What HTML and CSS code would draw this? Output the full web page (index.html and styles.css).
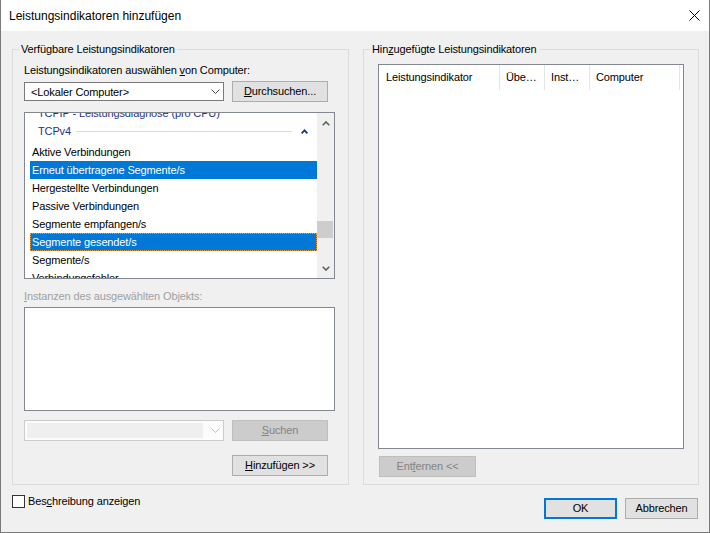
FILE: index.html
```html
<!DOCTYPE html>
<html lang="de">
<head>
<meta charset="utf-8">
<title>Leistungsindikatoren hinzufügen</title>
<link rel="stylesheet" href="styles.css">
</head>
<body>
<div class="window">
  <div class="titlebar">
    <span class="title">Leistungsindikatoren hinzufügen</span>
    <svg class="close" width="11" height="11" viewBox="0 0 11 11"><path d="M0.5 0.5 L10.5 10.5 M10.5 0.5 L0.5 10.5" stroke="#000" stroke-width="1" fill="none"/></svg>
  </div>
  <div class="main">
    <div class="groups">
      <fieldset class="group group-left">
        <legend>Verfügbare Leistungsindikatoren</legend>
        <div class="group-inner left-inner">
          <div class="label">Leistungsindikatoren auswählen <u>v</u>on Computer:</div>
          <div class="row row-computer">
            <div class="combo">
              <span class="combo-text">&lt;Lokaler Computer&gt;</span>
              <svg class="chev" width="9" height="5" viewBox="0 0 9 5"><path d="M0.5 0.5 L4.5 4.5 L8.5 0.5" stroke="#444" stroke-width="1" fill="none"/></svg>
            </div>
            <button class="btn btn-wide"><u>D</u>urchsuchen...</button>
          </div>
          <div class="listbox">
            <div class="list-items">
              <div class="grp-clipped"><span>TCPIP - Leistungsdiagnose (pro CPU)</span></div>
              <div class="grp">
                <span class="grp-name">TCPv4</span>
                <span class="grp-line"></span>
                <svg class="grp-caret" width="7" height="5" viewBox="0 0 7 5"><path d="M0.6 4.4 L3.5 1.4 L6.4 4.4" stroke="#1e3287" stroke-width="1.8" fill="none"/></svg>
              </div>
              <div class="item">Aktive Verbindungen</div>
              <div class="item sel">Erneut übertragene Segmente/s</div>
              <div class="item">Hergestellte Verbindungen</div>
              <div class="item">Passive Verbindungen</div>
              <div class="item">Segmente empfangen/s</div>
              <div class="item sel focus">Segmente gesendet/s</div>
              <div class="item">Segmente/s</div>
              <div class="item">Verbindungsfehler</div>
            </div>
            <div class="scrollbar">
              <div class="sb-btn">
                <svg width="8" height="5" viewBox="0 0 8 5"><path d="M0.7 4.3 L4 1 L7.3 4.3" stroke="#606060" stroke-width="1.6" fill="none"/></svg>
              </div>
              <div class="sb-track"><div class="sb-thumb"></div></div>
              <div class="sb-btn">
                <svg width="8" height="5" viewBox="0 0 8 5"><path d="M0.7 0.7 L4 4 L7.3 0.7" stroke="#606060" stroke-width="1.6" fill="none"/></svg>
              </div>
            </div>
          </div>
          <div class="label label-instances disabled-text"><u>I</u>nstanzen des ausgewählten Objekts:</div>
          <div class="instances"></div>
          <div class="row row-search">
            <div class="combo combo-disabled">
              <span class="combo-fill"></span>
              <svg class="chev" width="9" height="5" viewBox="0 0 9 5"><path d="M0.5 0.5 L4.5 4.5 L8.5 0.5" stroke="#bdbdbd" stroke-width="1" fill="none"/></svg>
            </div>
            <button class="btn btn-wide btn-disabled"><u>S</u>uchen</button>
          </div>
          <div class="row row-add">
            <button class="btn btn-wide"><u>H</u>inzufügen &gt;&gt;</button>
          </div>
        </div>
      </fieldset>
      <fieldset class="group group-right">
        <legend>Hin<u>z</u>ugefügte Leistungsindikatoren</legend>
        <div class="group-inner right-inner">
          <div class="listview">
            <div class="lv-header">
              <div class="lv-col col-1">Leistungsindikator</div>
              <div class="lv-col col-2">Übe…</div>
              <div class="lv-col col-3">Inst…</div>
              <div class="lv-col col-4">Computer</div>
            </div>
          </div>
          <button class="btn btn-remove btn-disabled">Ent<u>f</u>ernen &lt;&lt;</button>
        </div>
      </fieldset>
    </div>
    <div class="footer">
      <label class="check"><span class="check-box"></span><span class="check-text">Bes<u>c</u>hreibung anzeigen</span></label>
      <div class="actions">
        <button class="btn btn-dlg btn-ok">OK</button>
        <button class="btn btn-dlg">Abbrechen</button>
      </div>
    </div>
  </div>
</div>
</body>
</html>
```
FILE: styles.css
```css
html, body {
  margin: 0;
  padding: 0;
  background: #f0f0f0;
}

body {
  font-family: "Liberation Sans", Arial, sans-serif;
  font-size: 11px;
  letter-spacing: -0.13px;
  color: #000;
}

u {
  text-decoration: underline;
  text-underline-offset: 1px;
}

.window {
  width: 710px;
  height: 533px;
  box-sizing: border-box;
  border: 1px solid #7a7a7a;
  border-top: none;
  background: #f0f0f0;
  display: flex;
  flex-direction: column;
}

.titlebar {
  height: 31px;
  flex: none;
  background: #fff;
  display: flex;
  align-items: center;
  padding-left: 8px;
  font-size: 12px;
  letter-spacing: 0;
}

.close {
  margin-left: auto;
  margin-right: 9px;
  display: block;
}

.main {
  padding: 10px 10px 0 11px;
}

.groups {
  display: flex;
  gap: 14px;
  align-items: stretch;
}

.group {
  margin: 0;
  padding: 0;
  border: 1px solid #dcdcdc;
  min-width: 0;
  box-sizing: border-box;
}

.group legend {
  padding: 0 2px;
  margin-left: 6px;
  line-height: 16px;
}

.group-left {
  width: 337px;
}

.group-right {
  width: 336px;
}

.left-inner {
  padding: 5px 0 8px 11px;
}

.right-inner {
  padding: 7px 0 0 14px;
}

.label {
  line-height: 16px;
  height: 16px;
  white-space: nowrap;
}

.disabled-text {
  color: #a0a0a0;
}

.row {
  display: flex;
  width: 304px;
  gap: 8px;
  height: 21px;
  align-items: center;
}

.row-computer {
  margin-top: 3px;
}

.combo {
  width: 200px;
  height: 19px;
  box-sizing: border-box;
  border: 1px solid #7a7a7a;
  background: #fff;
  display: flex;
  align-items: center;
  padding-left: 6px;
  padding-right: 3px;
}

.combo-text {
  flex: 1;
  white-space: nowrap;
}

.chev {
  display: block;
  margin-right: 0;
}

.combo-disabled {
  height: 21px;
  border-color: #cccccc;
  padding-left: 2px;
  background: #fcfcfc;
}

.combo-fill {
  width: 178px;
  height: 15px;
  background: #efefef;
  margin-right: 8px;
}

.btn {
  height: 21px;
  box-sizing: border-box;
  border: 1px solid #adadad;
  background: #e1e1e1;
  font: inherit;
  letter-spacing: inherit;
  color: #000;
  padding: 0;
  margin: 0;
  line-height: 19px;
  text-align: center;
  flex: none;
}

.btn-wide {
  width: 96px;
}

.btn-disabled {
  background: #cccccc;
  border-color: #bfbfbf;
  color: #838383;
}

.listbox {
  margin-top: 10px;
  width: 311px;
  height: 167px;
  box-sizing: border-box;
  border: 1px solid #828790;
  background: #fff;
  display: flex;
}

.list-items {
  flex: 1;
  overflow: hidden;
  padding-left: 5px;
}

.grp-clipped {
  height: 6px;
  overflow: hidden;
  padding-left: 8px;
  color: #1e3287;
}

.grp-clipped span {
  display: block;
  line-height: 18px;
  margin-top: -9px;
  white-space: nowrap;
}

.grp {
  height: 24px;
  display: flex;
  align-items: center;
  padding-left: 8px;
  padding-right: 9px;
  color: #1e3287;
}

.grp-name {
  line-height: 24px;
}

.grp-line {
  flex: 1;
  height: 1px;
  background: #d5dbe8;
  margin: 0 9px 0 5px;
}

.grp-caret {
  display: block;
}

.item {
  height: 18px;
  line-height: 18px;
  padding-left: 2px;
  white-space: nowrap;
  box-sizing: border-box;
}

.item.sel {
  background: #0078d7;
  color: #fff;
}

.item.focus {
  outline: 1px dotted #f0a040;
  outline-offset: -1px;
}

.scrollbar {
  width: 17px;
  flex: none;
  background: #f0f0f0;
  display: flex;
  flex-direction: column;
}

.sb-btn {
  height: 20px;
  flex: none;
  display: flex;
  align-items: center;
  justify-content: center;
}

.sb-btn svg {
  display: block;
}

.sb-track {
  flex: 1;
}

.sb-thumb {
  margin-top: 88px;
  height: 17px;
  width: 16px;
  background: #cdcdcd;
}

.label-instances {
  margin-top: 9px;
}

.instances {
  margin-top: 3px;
  width: 311px;
  height: 104px;
  box-sizing: border-box;
  border: 1px solid #828790;
  background: #fff;
}

.row-search {
  margin-top: 9px;
}

.row-add {
  margin-top: 14px;
  justify-content: flex-end;
}

.listview {
  width: 306px;
  height: 385px;
  box-sizing: border-box;
  border: 1px solid #828790;
  background: #fff;
}

.lv-header {
  display: flex;
  height: 25px;
}

.lv-col {
  box-sizing: border-box;
  border-right: 1px solid #e5e5e5;
  line-height: 25px;
  padding-left: 6px;
  white-space: nowrap;
  overflow: hidden;
}

.col-1 { width: 121px; padding-left: 7px; }
.col-2 { width: 45px; }
.col-3 { width: 45px; }
.col-4 { width: 90px; }

.btn-remove {
  display: block;
  margin-top: 7px;
  margin-left: 1px;
  width: 97px;
}

.footer {
  display: flex;
  justify-content: space-between;
  align-items: flex-start;
}

.check {
  margin-top: 8px;
  display: flex;
  align-items: center;
  height: 16px;
  line-height: 16px;
}

.check-box {
  width: 13px;
  height: 13px;
  box-sizing: border-box;
  border: 1px solid #333;
  background: #fff;
  margin-right: 3px;
}

.actions {
  margin-top: 13px;
  margin-right: 1px;
  display: flex;
  gap: 8px;
}

.btn-dlg {
  width: 73px;
}

.btn-ok {
  border: 2px solid #0078d7;
  line-height: 17px;
}
```
